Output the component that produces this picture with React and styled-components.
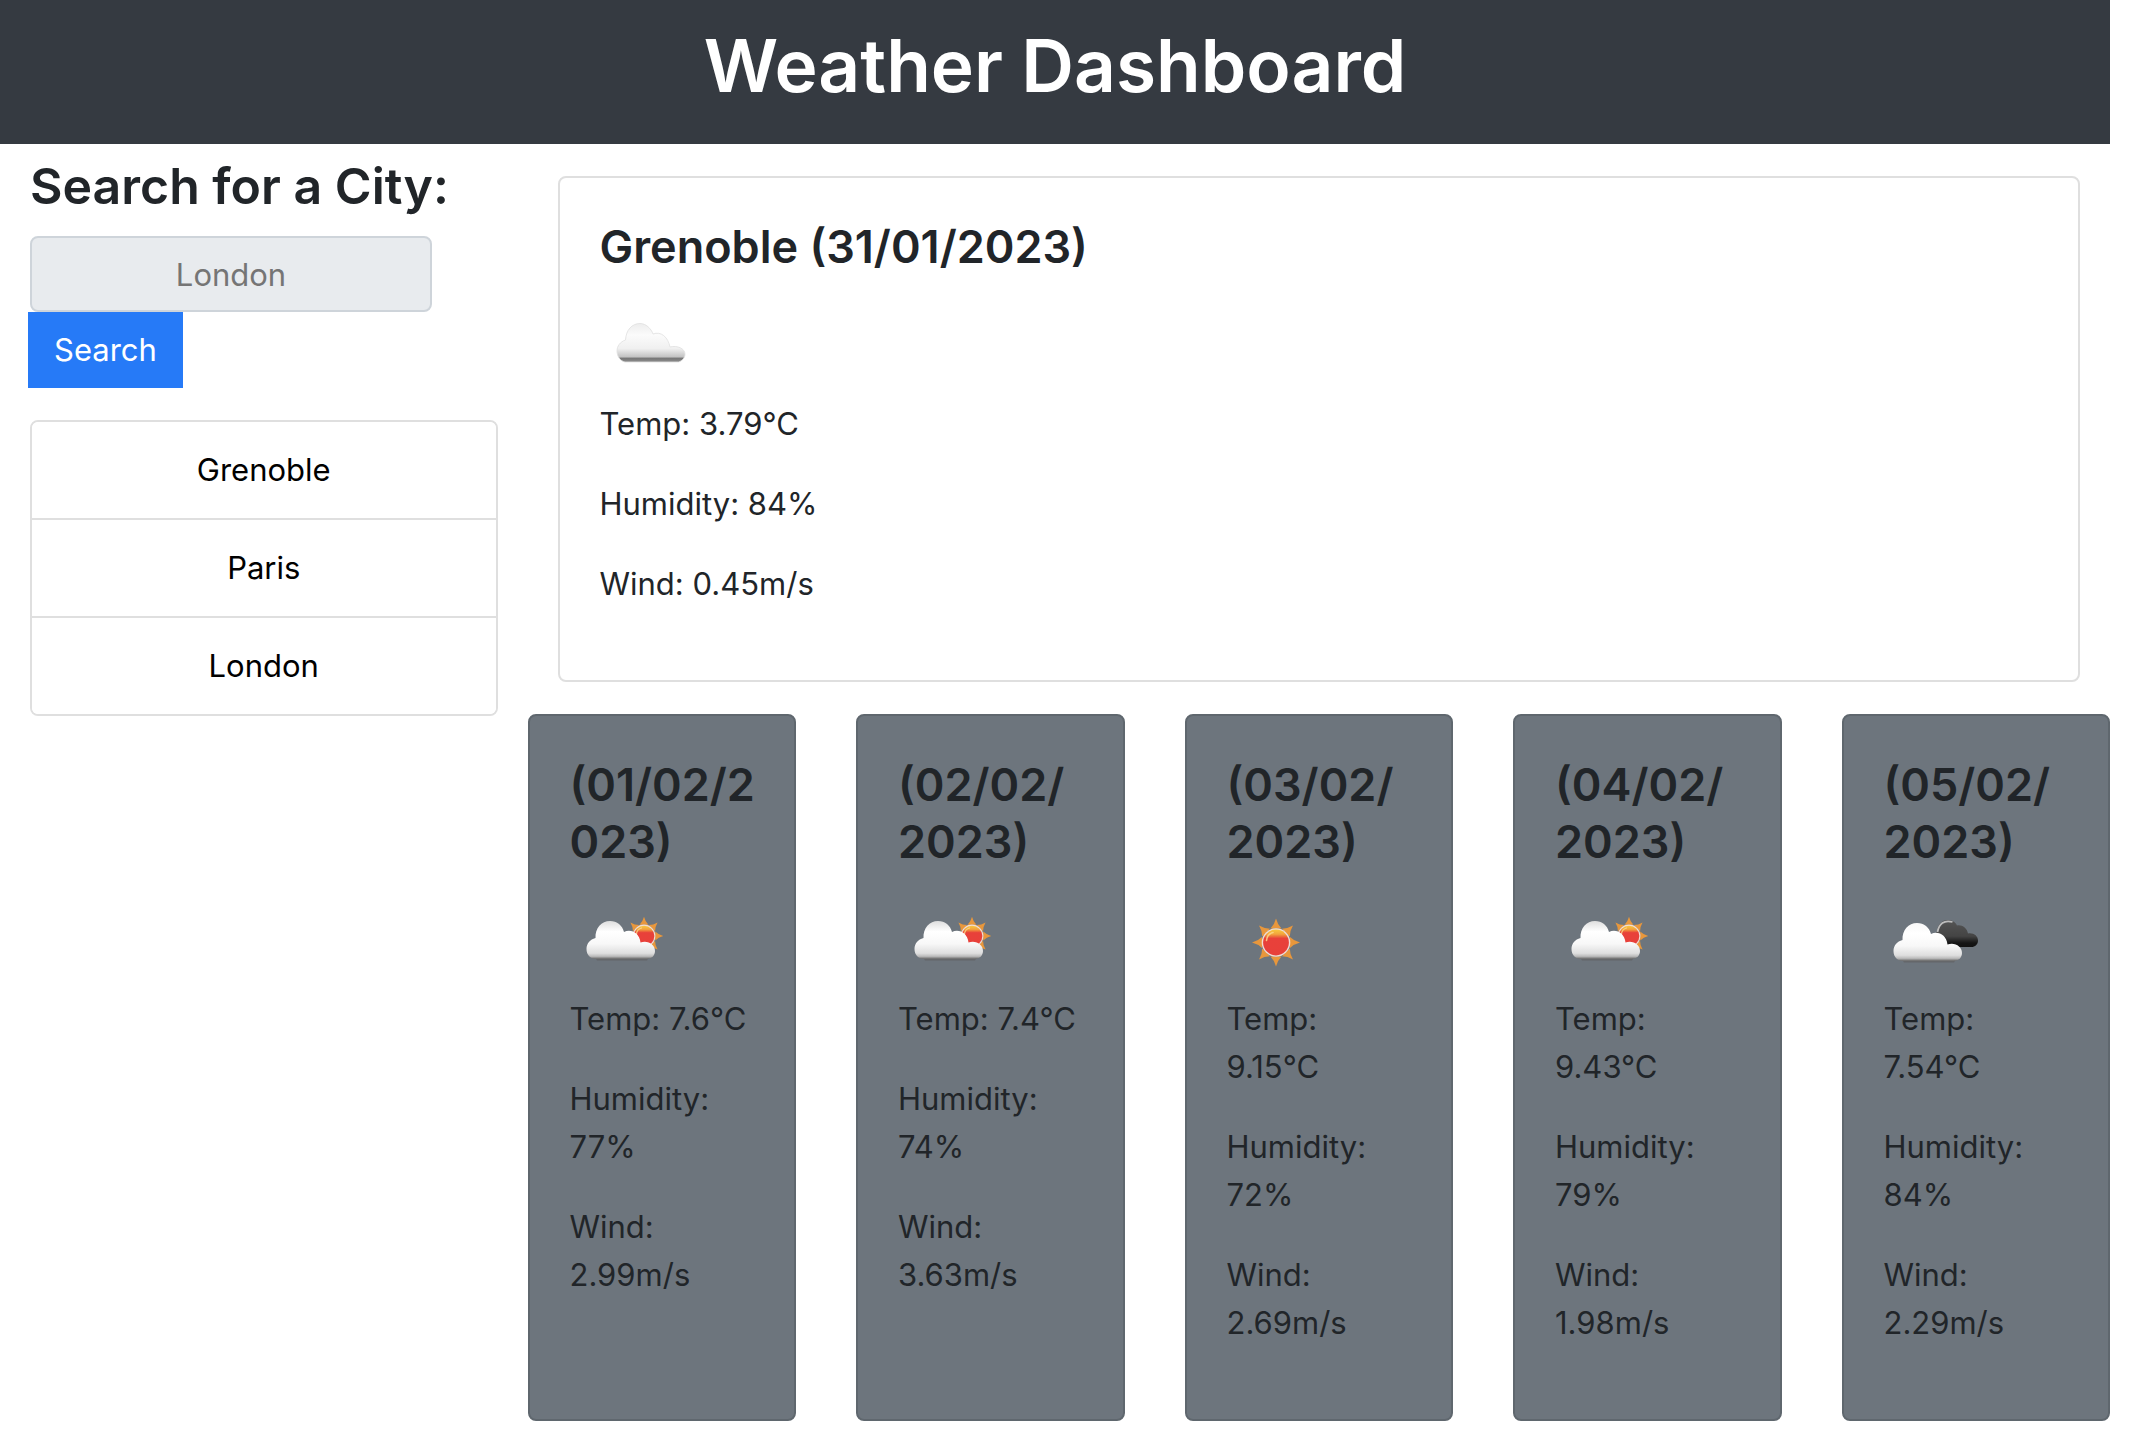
import React, { useId } from "react";
import styled, { createGlobalStyle } from "styled-components";

const GlobalStyle = createGlobalStyle`
  *, *::before, *::after { box-sizing: border-box; }
  body {
    margin: 0;
    background: #fff;
    color: #212529;
    font-family: Inter, "Liberation Sans", sans-serif;
    font-size: 31px;
    line-height: 48px;
  }
  h1, h2, h3, h4, p, ul { margin: 0; padding: 0; }
`;

const Page = styled.div`
  padding-right: 32px;
`;

const Header = styled.header`
  padding: 18px 16px 30px;
  background: #353a41;
  color: #fff;
  text-align: center;
`;

const PageTitle = styled.h1`
  font-size: 73px;
  font-weight: 600;
  line-height: 96px;
`;

const Layout = styled.div`
  display: grid;
  grid-template-columns: minmax(0, 1fr) minmax(0, 3fr);
  align-items: start;
`;

const Sidebar = styled.aside`
  padding: 8px 30px;
`;

const SearchForm = styled.form`
  display: flex;
  flex-direction: column;
  align-items: flex-start;
  margin-bottom: 32px;
`;

const SearchLabel = styled.label`
  margin-bottom: 16px;
  font-size: 50px;
  font-weight: 600;
  line-height: 68px;
  white-space: nowrap;
`;

const SearchInput = styled.input`
  width: 86%;
  height: 76px;
  padding: 12px 24px;
  border: 2px solid #ced4da;
  border-radius: 8px;
  background: #e8ebee;
  font: inherit;
  text-align: center;
  &::placeholder { color: #757575; opacity: 1; }
`;

const SearchButton = styled.button`
  height: 76px;
  margin-left: -2px;
  padding: 12px 24px;
  border: 2px solid #267af7;
  background: #267af7;
  color: #fff;
  font: inherit;
  cursor: pointer;
`;

const History = styled.ul`
  overflow: hidden;
  border: 2px solid #dfdfdf;
  border-radius: 8px;
  list-style: none;
`;

const HistoryItem = styled.li`
  & + & { border-top: 2px solid #dfdfdf; }
`;

const HistoryButton = styled.button`
  display: block;
  width: 100%;
  padding: 24px 40px;
  border: 0;
  background: #fff;
  color: #000;
  font: inherit;
  cursor: pointer;
`;

const Main = styled.main`
  padding: 32px 0;
`;

const Card = styled.article`
  padding: 40px 40px 72px;
  border: 2px solid ${(p) => (p.$muted ? "#5f676e" : "#dfdfdf")};
  border-radius: 8px;
  background: ${(p) => (p.$muted ? "#6d757d" : "#fff")};
`;

const Today = styled.section`
  padding: 0 30px;
  margin-bottom: 32px;
`;

const Forecast = styled.section`
  display: grid;
  grid-template-columns: repeat(5, minmax(0, 1fr));
  gap: 60px;
`;

const CardTitle = styled.h4`
  margin-bottom: 24px;
  font-size: 45px;
  font-weight: 600;
  line-height: 1.28;
  white-space: pre;
`;

const WeatherIcon = styled.svg`
  display: block;
  width: 100px;
  height: 100px;
`;

const Reading = styled.p`
  & + & { margin-top: 32px; }
`;

function Sun({ id, cx, cy, s = 1 }) {
  const rays = Array.from({ length: 8 }, (_, i) => i * 45);
  return (
    <g transform={`translate(${cx} ${cy}) scale(${s})`}>
      {rays.map((a) => (
        <path key={a} d="M-5.5 -14 Q-1.5 -18 0 -24 Q1.5 -18 5.5 -14 Z" fill="#e8973c" transform={`rotate(${a})`} />
      ))}
      <circle r="14.3" fill="#f3ddd2" />
      <circle r="12.9" fill={`url(#${id}-sun)`} />
      <path d="M-9.5 -2 Q-9 -8.5 -3 -10" fill="none" stroke="#fbd98a" strokeWidth="1.6" strokeLinecap="round" opacity="0.85" />
    </g>
  );
}

const FRONT_CLOUD =
  "M26 64 C20 64 16.5 59.5 16.5 54 C16.5 48.5 20 44.5 25.5 43 C25 33 31.5 26 40 26 C47 26 52.5 30.5 54 37 C61 33.5 69.5 38 70.5 47.5 C78 45 85 49.5 85 56 C85 61 81 64 76.5 64 Z";

function FrontCloud({ id, dx = 0, dy = 0 }) {
  return (
    <g transform={`translate(${dx} ${dy})`}>
      <path d="M25 62 H79 L77 65.5 H27 Z" fill="#65676a" />
      <path d={FRONT_CLOUD} fill={`url(#${id}-cloud)`} />
    </g>
  );
}

function Icon({ kind, label }) {
  const id = useId().replace(/:/g, "");
  return (
    <WeatherIcon viewBox="0 0 100 100" role="img" aria-label={label}>
      <defs>
        <linearGradient id={`${id}-sun`} x1="0" y1="0" x2="0" y2="1">
          <stop offset="0" stopColor="#f7c83f" />
          <stop offset="0.18" stopColor="#f2a33d" />
          <stop offset="0.34" stopColor="#e8413a" />
          <stop offset="1" stopColor="#e8403a" />
        </linearGradient>
        <linearGradient id={`${id}-cloud`} x1="0" y1="26" x2="0" y2="64" gradientUnits="userSpaceOnUse">
          <stop offset="0" stopColor={kind === "few" ? "#dedede" : "#f8f8f8"} />
          <stop offset="0.28" stopColor="#fff" />
          <stop offset="0.6" stopColor="#f8f8f8" />
          <stop offset="0.85" stopColor="#dedede" />
          <stop offset="0.93" stopColor="#bbb" />
          <stop offset="1" stopColor="#666" />
        </linearGradient>
        <linearGradient id={`${id}-pale`} x1="0" y1="0" x2="0" y2="1">
          <stop offset="0" stopColor="#ededed" />
          <stop offset="0.3" stopColor="#fbfbfb" />
          <stop offset="0.65" stopColor="#f0f0f0" />
          <stop offset="0.86" stopColor="#c4c4c4" />
          <stop offset="0.91" stopColor="#777" />
          <stop offset="1" stopColor="#8e8e8e" />
        </linearGradient>
        <linearGradient id={`${id}-dark`} x1="0" y1="0" x2="0" y2="1">
          <stop offset="0" stopColor="#555" />
          <stop offset="0.6" stopColor="#444" />
          <stop offset="0.85" stopColor="#151515" />
          <stop offset="1" stopColor="#111" />
        </linearGradient>
      </defs>
      {kind === "cloud" && (
        <path
          d="M25 62 C20 61 17 56 17 51 C17 46 20 42 25.5 40 C26 30 32 23.5 40 23.5 C46 23.5 51 28.5 53 34 C61 31 68 37 70 47 C77 45 85 48.5 85 54 C85 58 82 61 78.5 62 Z"
          fill={`url(#${id}-pale)`}
          stroke="#e0e0e0"
          strokeWidth="0.8"
        />
      )}
      {kind === "clear" && <Sun id={id} cx={49} cy={47.5} />}
      {kind === "few" && (
        <>
          <Sun id={id} cx={74} cy={41} s={0.8} />
          <FrontCloud id={id} />
        </>
      )}
      {kind === "broken" && (
        <>
          <path
            d="M56 52 C50 50 49 42 53 36 C54 29 58 25 63.5 25 C68 25 71.5 27 73 30.5 C78 29.5 83 33 84 38.5 C89.5 37.5 94 41 94 45.5 C94 49.5 91 52 87.5 52 Z"
            fill={`url(#${id}-dark)`}
          />
          <path d="M53.5 37 C55 29 60 24.5 68.5 27" fill="none" stroke="#bdbdbd" strokeWidth="1.8" />
          <FrontCloud id={id} dx={-7} dy={2} />
        </>
      )}
    </WeatherIcon>
  );
}

function WeatherCard({ title, icon, label, temp, humidity, wind, muted }) {
  return (
    <Card $muted={muted}>
      <CardTitle>{title}</CardTitle>
      <Icon kind={icon} label={label} />
      <Reading>Temp: {temp}°C</Reading>
      <Reading>Humidity: {humidity}%</Reading>
      <Reading>Wind: {wind}m/s</Reading>
    </Card>
  );
}

const cities = ["Grenoble", "Paris", "London"];

const forecast = [
  { title: "(01/02/2\n023)", icon: "few", label: "Few clouds", temp: "7.6", humidity: 77, wind: "2.99" },
  { title: "(02/02/\n2023)", icon: "few", label: "Few clouds", temp: "7.4", humidity: 74, wind: "3.63" },
  { title: "(03/02/\n2023)", icon: "clear", label: "Clear sky", temp: "9.15", humidity: 72, wind: "2.69" },
  { title: "(04/02/\n2023)", icon: "few", label: "Few clouds", temp: "9.43", humidity: 79, wind: "1.98" },
  { title: "(05/02/\n2023)", icon: "broken", label: "Broken clouds", temp: "7.54", humidity: 84, wind: "2.29" },
];

export default function App() {
  return (
    <Page>
      <GlobalStyle />
      <Header>
        <PageTitle>Weather Dashboard</PageTitle>
      </Header>
      <Layout>
        <Sidebar>
          <SearchForm onSubmit={(e) => e.preventDefault()}>
            <SearchLabel htmlFor="city">Search for a City:</SearchLabel>
            <SearchInput id="city" type="text" placeholder="London" />
            <SearchButton type="submit">Search</SearchButton>
          </SearchForm>
          <History>
            {cities.map((city) => (
              <HistoryItem key={city}>
                <HistoryButton type="button">{city}</HistoryButton>
              </HistoryItem>
            ))}
          </History>
        </Sidebar>
        <Main>
          <Today>
            <WeatherCard title="Grenoble (31/01/2023)" icon="cloud" label="Scattered clouds" temp="3.79" humidity={84} wind="0.45" />
          </Today>
          <Forecast>
            {forecast.map((day) => (
              <WeatherCard key={day.title} muted {...day} />
            ))}
          </Forecast>
        </Main>
      </Layout>
    </Page>
  );
}
